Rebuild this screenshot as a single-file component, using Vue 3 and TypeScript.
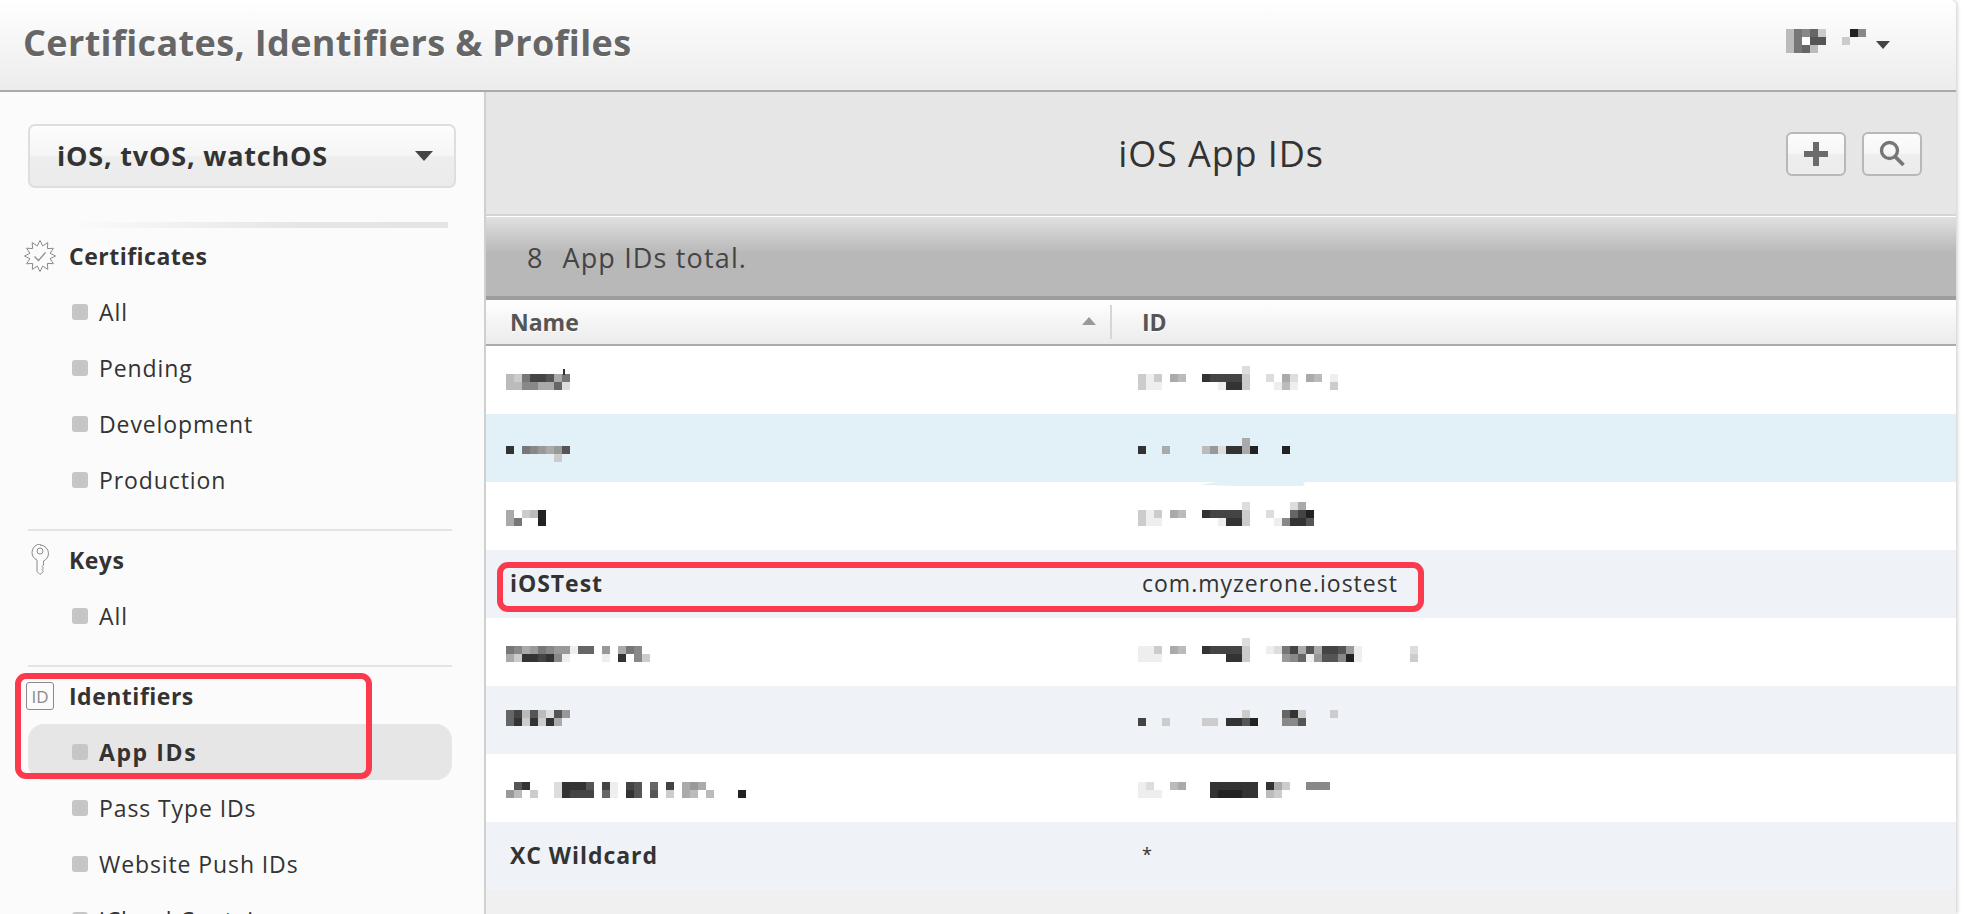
<script setup lang="ts">
interface Cell { x: number; y: number; g: string }
interface Row { name?: string; id?: string; nameCells: Cell[]; idCells: Cell[]; tone: string; tick?: boolean; sliver?: boolean }

function mosaic(rows: string[], top: number): Cell[] {
  const out: Cell[] = []
  rows.forEach((line, r) => {
    line.split('').forEach((c, i) => {
      if (c === '.') return
      out.push({ x: i * 8, y: top + r * 8, g: '#' + c + c + c + c + c + c })
    })
  })
  return out
}

const rows: Row[] = [
  {
    tone: 'white',
    tick: true,
    nameCells: mosaic(['bc7445a7', 'bb88aa6d'], 28),
    idCells: mosaic(['.............d', 'cec.ab..34444c..d.ad.ab.e', 'cee.......e33c...ebe....c'], 20),
  },
  {
    tone: 'blue',
    nameCells: mosaic(['3.789a95', '......c'], 32),
    idCells: mosaic(['.............a', '3..a....b9d33a2...2'], 24),
  },
  {
    tone: 'white',
    sliver: true,
    nameCells: mosaic(['a.cb2', 'a7..2'], 28),
    idCells: mosaic(['.............d.....da', 'cec.ab..34444c..d..642', 'cee.......e33c...e8335'], 20),
  },
  { tone: 'grey', name: 'iOSTest', id: 'com.myzerone.iostest', nameCells: [], idCells: [] },
  {
    tone: 'white',
    nameCells: mosaic(['78a97899e66.9.a78', 'ac33438e....e.3.8c'], 28),
    idCells: mosaic(['.............d', 'eec.ab..34444c..ed74a5a4459e......d', 'eee.......f33c....986e95582e......c'], 20),
  },
  {
    tone: 'grey',
    nameCells: mosaic(['64b5bd59', '63c3c3a.'], 24),
    idCells: mosaic(['.............c....63c...c', '4..c....cc.3352...885'], 24),
  },
  {
    tone: 'white',
    nameCells: mosaic(['.53...d3335.4e.45.6.4.a9a', '9b.c..d3444.6e.35.5.c.ab.b...2'], 28),
    idCells: mosaic(['ed..ba...333333.3ac..888', 'eee......322233.bc'], 28),
  },
  { tone: 'grey', name: 'XC Wildcard', id: '*', nameCells: [], idCells: [] },
]

const sections = [
  { title: 'Certificates', icon: 'badge', items: ['All', 'Pending', 'Development', 'Production'] },
  { title: 'Keys', icon: 'key', items: ['All'] },
  { title: 'Identifiers', icon: 'id', items: ['App IDs', 'Pass Type IDs', 'Website Push IDs', 'iCloud Containers'] },
]

const starPoints = Array.from({ length: 24 }, (_, i) => {
  const r = i % 2 === 0 ? 15.5 : 10.5
  const a = (i * Math.PI) / 12 - Math.PI / 2
  return `${(16 + r * Math.cos(a)).toFixed(1)},${(16 + r * Math.sin(a)).toFixed(1)}`
}).join(' ')

const avatarA = mosaic(['b786c', 'b7f55', 'b76b'], 0)
const avatarB = mosaic(['.28', 'c'], 0)
</script>

<template>
  <div class="page">
    <header class="top">
      <h1 class="brand">Certificates, Identifiers &amp; Profiles</h1>
      <div class="account">
        <svg class="mos" width="40" height="24"><rect v-for="(c, i) in avatarA" :key="i" :x="c.x" :y="c.y" width="8" height="8" :fill="c.g" /></svg>
        <svg class="mos" width="24" height="24"><rect v-for="(c, i) in avatarB" :key="i" :x="c.x" :y="c.y" width="8" height="8" :fill="c.g" /></svg>
        <span class="caret small"></span>
      </div>
    </header>

    <div class="body">
      <aside class="side">
        <div class="select">
          <span class="select-label">iOS, tvOS, watchOS</span>
          <span class="caret"></span>
        </div>
        <div class="fade"></div>
        <section v-for="s in sections" :key="s.title" class="group">
          <div class="group-head">
            <span class="icon">
              <svg v-if="s.icon === 'badge'" width="32" height="32" viewBox="0 0 32 32" fill="none" stroke="#8a8a8a" stroke-width="1">
                <polygon :points="starPoints" />
                <path d="M10.5 16.5l4 4 7-8" stroke-width="1.2" />
              </svg>
              <svg v-else-if="s.icon === 'key'" width="20" height="32" viewBox="0 0 20 32" fill="none" stroke="#8a8a8a" stroke-width="1">
                <path d="M10 1a8.500 8.500 0 0 1 8.500 8.500c0 3.500-2.200 6.300-5 7.500v4l-1.500 1.500 1.500 1.500-1.500 1.500 1.500 1.800-3.500 3.200-3-3v-11.500c-2.900-1.200-5-4-5-7.500a8.500 8.500 0 0 1 8.500-8.500z" />
                <circle cx="10" cy="7" r="3" />
              </svg>
              <span v-else class="id-box">ID</span>
            </span>
            <span class="group-title">{{ s.title }}</span>
          </div>
          <a v-for="item in s.items" :key="item" class="item" :class="{ active: item === 'App IDs' }">
            <span class="dot"></span>
            <span>{{ item }}</span>
          </a>
        </section>
        <div class="mark mark-side"></div>
      </aside>

      <main class="main">
        <div class="title-bar">
          <h2>iOS App IDs</h2>
          <div class="tools">
            <button class="tool" type="button" aria-label="Add">
              <svg width="24" height="24" viewBox="0 0 24 24"><path d="M9 0h6v9h9v6h-9v9H9v-9H0V9h9z" fill="#6b6b6b" /></svg>
            </button>
            <button class="tool" type="button" aria-label="Search">
              <svg width="30" height="30" viewBox="0 0 30 30" fill="none" stroke="#767676" stroke-width="3.400"><circle cx="12.500" cy="11.500" r="8" /><path d="M18 17.500l8.500 8.500" stroke-width="3.800" /></svg>
            </button>
          </div>
        </div>
        <div class="total"><span class="count">8</span><span class="total-label">App IDs total.</span></div>
        <div class="thead">
          <div class="th name-col">Name<span class="sort"></span></div>
          <div class="th id-col">ID</div>
        </div>
        <div v-for="(r, i) in rows" :key="i" class="row" :class="r.tone">
          <div class="cell name-col">
            <strong v-if="r.name">{{ r.name }}</strong>
            <svg v-else class="blur-name" width="320" height="68">
              <rect v-for="(c, k) in r.nameCells" :key="k" :x="c.x" :y="c.y" width="8" height="8" :fill="c.g" />
              <rect v-if="r.tick" x="57" y="23" width="2" height="6" fill="#333" />
            </svg>
          </div>
          <div class="cell id-col">
            <span v-if="r.id" class="idval" :class="{ star: r.id === '*' }">{{ r.id }}</span>
            <svg v-else class="blur-id" width="320" height="68">
              <rect v-for="(c, k) in r.idCells" :key="k" :x="c.x" :y="c.y" width="8" height="8" :fill="c.g" />
              <polygon v-if="r.sliver" points="62,3 78,0 167,0 165,4 100,4" fill="#e2f0f8" />
            </svg>
          </div>
        </div>
        <div class="mark mark-row"></div>
      </main>
    </div>
  </div>
</template>

<style>
html, body { margin: 0; height: 914px; overflow: hidden; background: #fff; }
</style>

<style scoped>
.page {
  width: 1956px;
  height: 914px;
  overflow: hidden;
  border-top-right-radius: 6px;
  box-shadow: 1px 0 4px rgba(0, 0, 0, 0.22);
  font-family: "Open Sans", Lato, sans-serif;
  color: #333;
  display: flex;
  flex-direction: column;
}
.top {
  height: 90px;
  flex: none;
  box-sizing: content-box;
  border-bottom: 2px solid #aaa;
  background: linear-gradient(#fff, #ececec);
  display: flex;
  align-items: center;
  justify-content: space-between;
  padding-left: 23px;
}
.brand {
  margin: -6px 0 0;
  font-size: 36px;
  font-weight: 700;
  letter-spacing: 0.36px;
  color: #666;
  text-shadow: 0 1px 1px #fff;
}
.account { display: flex; align-items: center; margin-right: 66px; gap: 16px; margin-top: -8px; }
.mos { display: block; }
.account .mos:nth-child(2) { margin-right: -6px; }
.caret {
  width: 0;
  height: 0;
  border-left: 9px solid transparent;
  border-right: 9px solid transparent;
  border-top: 10px solid #444;
}
.caret.small { border-left-width: 7px; border-right-width: 7px; border-top-width: 8px; margin-top: 8px; }
.body { flex: 1; display: flex; min-height: 0; }
.side {
  position: relative;
  width: 484px;
  flex: none;
  background: #fbfbfb;
  border-right: 2px solid #d0d0d0;
  padding-top: 32px;
  overflow: hidden;
}
.select {
  box-sizing: border-box;
  width: 428px;
  height: 64px;
  margin-left: 28px;
  border: 2px solid #dedede;
  border-radius: 7px;
  background: linear-gradient(#fdfdfd, #f5f5f5 50%, #eeeeee 50%, #ebebeb);
  display: flex;
  align-items: center;
  justify-content: space-between;
  padding: 0 21px 0 27px;
  font-size: 27px;
  font-weight: 700;
  letter-spacing: 0.8px;
  color: #333;
}
.select-label { margin-top: -2px; }
.fade {
  height: 6px;
  margin: 34px 36px 0 69px;
  background: linear-gradient(90deg, #fbfbfb, #e6e6e6 60%, #e4e4e4);
}
.group { padding-bottom: 21px; margin: 0 32px 0 28px; }
.group + .group { border-top: 2px solid #e4e4e4; margin-top: 0; }
.group + .group .group-head { margin-top: 1px; }
.group-head { height: 56px; display: flex; align-items: center; position: relative; padding-left: 41px; }
.icon { position: absolute; left: -4px; top: 50%; transform: translateY(-50%); width: 32px; display: flex; justify-content: center; }
.group-title { font-size: 23px; font-weight: 700; letter-spacing: 0.5px; color: #333; margin-top: -1px; }
.id-box {
  box-sizing: border-box;
  width: 28px;
  height: 28px;
  border: 1px solid #8a8a8a;
  border-radius: 3px;
  font-size: 17px;
  font-weight: 400;
  letter-spacing: 0;
  color: #8a8a8a;
  display: flex;
  align-items: center;
  justify-content: center;
}
.item {
  height: 56px;
  display: flex;
  align-items: center;
  padding-left: 44px;
  gap: 11px;
  font-size: 23px;
  letter-spacing: 0.9px;
  color: #333;
  border-radius: 16px;
}
.item.active { background: #e6e6e6; font-weight: 700; letter-spacing: 1.6px; }
.dot { width: 16px; height: 16px; background: #c6c6c6; border-radius: 3px; flex: none; }
.main { flex: 1; position: relative; background: #f0f0f0; min-width: 0; }
.title-bar {
  height: 122px;
  background: #e6e6e6;
  border-bottom: 2px solid #d4d4d4;
  position: relative;
  display: flex;
  align-items: center;
  justify-content: center;
}
.title-bar h2 { margin: 0; font-size: 36px; font-weight: 400; letter-spacing: 0.9px; color: #333; }
.tools { position: absolute; right: 34px; top: 40px; display: flex; gap: 16px; }
.tool {
  box-sizing: border-box;
  width: 60px;
  height: 44px;
  padding: 0;
  border: 2px solid #b8b8b8;
  border-radius: 6px;
  background: linear-gradient(#fcfcfc, #f6f6f6 50%, #eeeeee 50%, #ececec);
  display: flex;
  align-items: center;
  justify-content: center;
}
.total {
  box-sizing: border-box;
  height: 84px;
  border-top: 1px solid #fff;
  border-bottom: 4px solid #9d9d9d;
  background: linear-gradient(#e0e0e0, #b8b8b8 46%, #b8b8b8);
  display: flex;
  align-items: center;
  padding: 2px 0 0 41px;
  gap: 20px;
  font-size: 27px;
  color: #444;
}
.total-label { letter-spacing: 1.15px; }
.thead {
  box-sizing: content-box;
  height: 44px;
  border-bottom: 2px solid #aaa;
  background: linear-gradient(#fff, #ebebeb);
  display: flex;
  align-items: center;
}
.th { font-size: 23px; font-weight: 700; color: #555; text-shadow: 0 1px 0 #fff; }
.name-col { width: 626px; flex: none; padding-left: 24px; box-sizing: border-box; position: relative; }
.id-col { flex: 1; padding-left: 30px; box-sizing: border-box; }
.th.name-col { height: 34px; line-height: 34px; border-right: 2px solid #d6d6d6; }
.sort {
  position: absolute;
  right: 14px;
  top: 12px;
  width: 0;
  height: 0;
  border-left: 7px solid transparent;
  border-right: 7px solid transparent;
  border-bottom: 8px solid #999;
}
.row { height: 68px; display: flex; align-items: center; }
.row.white { background: #fff; }
.row.blue { background: #e2f0f8; }
.row.grey { background: #eff2f7; }
.cell { display: flex; align-items: center; height: 100%; font-size: 23px; color: #333; }
.cell strong { font-weight: 700; margin-top: -2px; letter-spacing: 0.95px; }
.idval { margin-top: -2px; letter-spacing: 1px; }
.idval.star { font-size: 18px; margin-top: -4px; }
.blur-name { display: block; margin-left: -4px; }
.blur-id { display: block; margin-left: -4px; }
.mark {
  position: absolute;
  box-sizing: border-box;
  border: 6px solid #fb3a4d;
  border-radius: 11px;
  pointer-events: none;
}
.mark-side { left: 15px; top: 581px; width: 357px; height: 106px; }
.mark-row { left: 11px; top: 470px; width: 927px; height: 50px; }
</style>
